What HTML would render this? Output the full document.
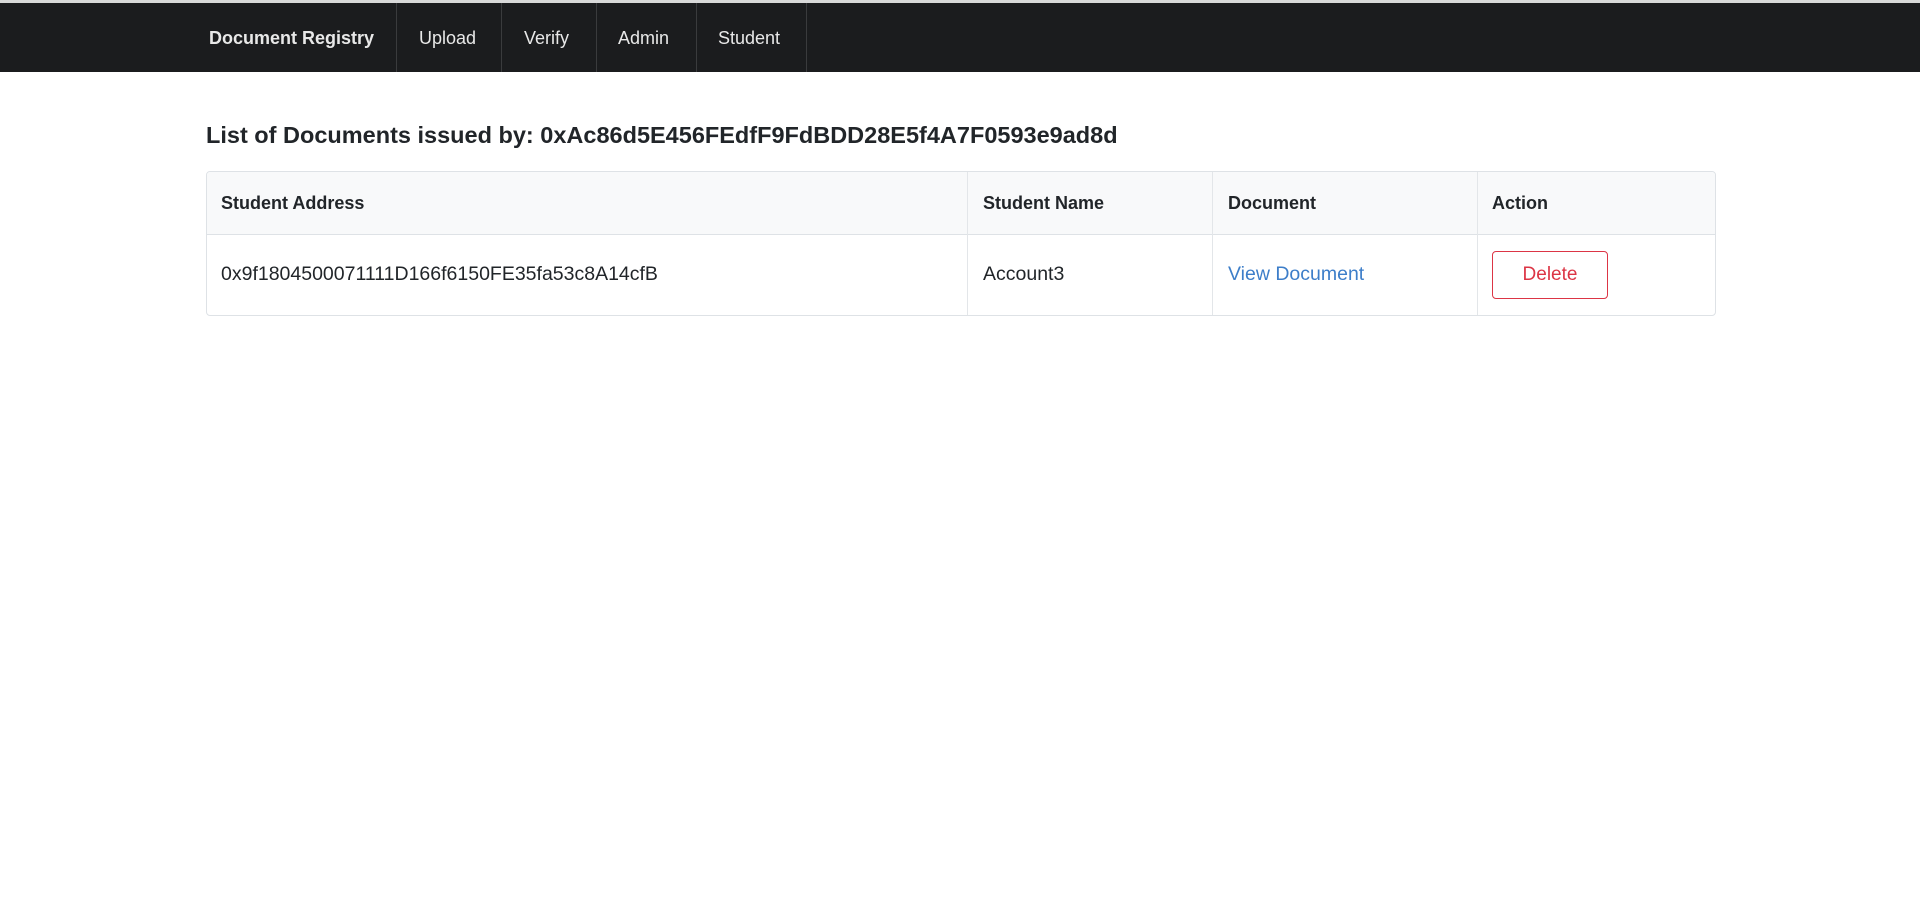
<!DOCTYPE html>
<html><head><meta charset="utf-8"><style>
*{box-sizing:border-box;margin:0;padding:0}
body{width:1920px;height:898px;background:#fff;font-family:"Liberation Sans",sans-serif;color:#212529;position:relative;overflow:hidden}
.top{position:absolute;left:0;top:0;width:1920px;height:3px;background:#d9d9d9}
.nav{position:absolute;left:0;top:3px;width:1920px;height:69px;background:#1b1c1e}
.nav a{position:absolute;top:1px;height:68px;line-height:68px;color:#e8e8e8;font-size:18px;text-decoration:none}
.sep{position:absolute;top:0;width:1px;height:69px;background:#3a3b3d}
h2{position:absolute;left:206px;top:122px;font-size:23.5px;font-weight:bold;color:#212529}
.tbl{position:absolute;left:206px;top:171px;width:1510px;height:145px;border:1px solid #dee2e6;border-radius:4px;overflow:hidden}
.hd{position:absolute;left:0;top:0;width:100%;height:63px;background:#f8f9fa;border-bottom:1px solid #dee2e6}
.c{position:absolute;font-size:18px}
.r{font-size:19.5px}
.b{font-weight:bold}
.v{position:absolute;top:0;width:1px;height:145px;background:#e3e6e9}
.btn{position:absolute;left:1285px;top:79px;width:116px;height:48px;border:1px solid #dc3545;border-radius:4px;color:#dc3545;font-size:19px;text-align:center;line-height:46px}
</style></head><body>
<div class="top"></div>
<div class="nav">
<a style="left:209px;font-weight:bold">Document Registry</a>
<div class="sep" style="left:396px"></div>
<a style="left:419px">Upload</a>
<div class="sep" style="left:501px"></div>
<a style="left:524px">Verify</a>
<div class="sep" style="left:596px"></div>
<a style="left:618px">Admin</a>
<div class="sep" style="left:696px"></div>
<a style="left:718px">Student</a>
<div class="sep" style="left:806px"></div>
</div>
<h2>List of Documents issued by: 0xAc86d5E456FEdfF9FdBDD28E5f4A7F0593e9ad8d</h2>
<div class="tbl">
<div class="hd"></div>
<div class="v" style="left:760px"></div>
<div class="v" style="left:1005px"></div>
<div class="v" style="left:1270px"></div>
<div class="c b" style="left:14px;top:21px">Student Address</div>
<div class="c b" style="left:776px;top:21px">Student Name</div>
<div class="c b" style="left:1021px;top:21px">Document</div>
<div class="c b" style="left:1285px;top:21px">Action</div>
<div class="c r" style="left:14px;top:91px">0x9f1804500071111D166f6150FE35fa53c8A14cfB</div>
<div class="c r" style="left:776px;top:91px">Account3</div>
<div class="c r" style="left:1021px;top:91px;color:#3d7ec9">View Document</div>
<div class="btn">Delete</div>
</div>
</body></html>
